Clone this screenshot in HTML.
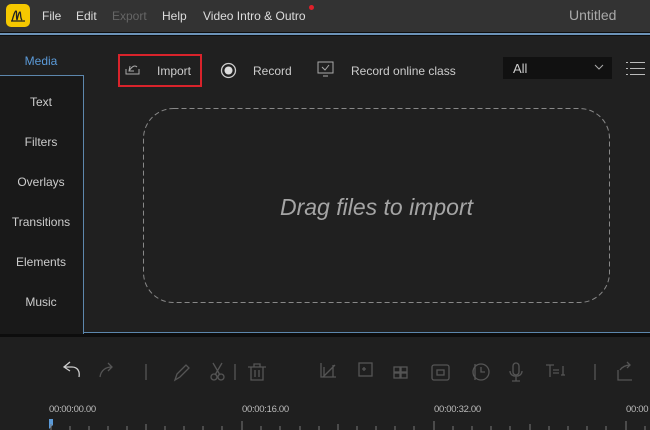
<!DOCTYPE html>
<html><head><meta charset="utf-8"><style>
*{margin:0;padding:0;box-sizing:border-box}
body{width:650px;height:430px;overflow:hidden;background:#0d0d0d;font-family:"Liberation Sans",sans-serif;position:relative;color:#ccc}
.abs{position:absolute}
#title{left:0;top:0;width:650px;height:32px;background:#333}
#title span{position:absolute;top:9px;font-size:12px;color:#ddd}
#main{left:0;top:36px;width:650px;height:297px;background:#202020}
#side{left:0;top:75px;width:84px;height:259px;background:#191919;border-top:1px solid #5d87ad;border-right:1px solid #5d87ad}
.st{position:absolute;left:0;width:82px;text-align:center;font-size:12px;color:#ccc}
.tb{font-size:12px;color:#ccc;position:absolute}
.gi{stroke:#555;fill:none;stroke-width:1.3}
.tc{position:absolute;top:404px;font-size:9.5px;color:#bbb;letter-spacing:-0.3px}
</style></head><body>
<div id="title" class="abs">
 <div class="abs" style="left:6px;top:4px;width:24px;height:23px;background:#f5c800;border-radius:5px"></div>
 <svg class="abs" style="left:9px;top:8px" width="18" height="16"><path d="M3 13 C5 6 6 3 7 3 C8 3 7 9 8 12 M8 12 C9 8 10 4 11 4 C12 5 11 10 13 12 M2 13 H16" stroke="#222" stroke-width="1.3" fill="none"/></svg>
 <span style="left:42px">File</span><span style="left:76px">Edit</span><span style="left:112px;color:#666">Export</span><span style="left:162px">Help</span><span style="left:203px">Video Intro &amp; Outro</span>
 <div class="abs" style="left:309px;top:5px;width:5px;height:5px;border-radius:50%;background:#e0202a"></div>
 <span style="left:569px;font-size:14px;top:7px;color:#aaa">Untitled</span>
</div>
<div class="abs" style="left:0;top:33px;width:650px;height:2px;background:#6c93b8"></div>
<div id="main" class="abs"></div>
<div class="st" style="top:54px;color:#5b9ad8">Media</div>
<div id="side" class="abs">
 <div class="st" style="top:19px">Text</div>
 <div class="st" style="top:59px">Filters</div>
 <div class="st" style="top:99px">Overlays</div>
 <div class="st" style="top:139px">Transitions</div>
 <div class="st" style="top:179px">Elements</div>
 <div class="st" style="top:219px">Music</div>
</div>
<div class="abs" style="left:83px;top:332px;width:567px;height:1px;background:#5d87ad"></div>
<div class="abs" style="left:118px;top:54px;width:84px;height:33px;border:2px solid #d9232b"></div>
<svg class="abs" style="left:125px;top:62px" width="16" height="14"><path d="M1 7 V12 H14 V7 M5 4 L4 9 L9 9 M4 9 C7 4 10 3 12 5" stroke="#aaa" fill="none"/></svg>
<div class="tb" style="left:157px;top:64px">Import</div>
<svg class="abs" style="left:220px;top:62px" width="17" height="17"><circle cx="8.5" cy="8.5" r="7" stroke="#ccc" stroke-width="1.3" fill="none"/><circle cx="8.5" cy="8.5" r="4" fill="#ddd"/></svg>
<div class="tb" style="left:253px;top:64px">Record</div>
<svg class="abs" style="left:317px;top:61px" width="18" height="17"><rect x="1" y="1" width="15" height="11" stroke="#aaa" fill="none"/><path d="M5 6 L8 9 L12 4 M6 15 H11" stroke="#aaa" fill="none"/></svg>
<div class="tb" style="left:351px;top:64px">Record online class</div>
<div class="abs" style="left:503px;top:57px;width:109px;height:22px;background:#111"></div>
<div class="tb" style="left:513px;top:61px;font-size:13px">All</div>
<svg class="abs" style="left:594px;top:64px" width="10" height="6"><path d="M1 1 L5 5 L9 1" stroke="#aaa" fill="none"/></svg>
<svg class="abs" style="left:626px;top:61px" width="20" height="15"><path d="M4 1.5H19M4 7.5H19M4 13.5H19M0 1.5H2M0 7.5H2M0 13.5H2" stroke="#bbb"/></svg>
<svg class="abs" style="left:0;top:0" width="650" height="430"><rect x="143.5" y="108.5" width="466" height="194" rx="30" stroke="#888" fill="none" stroke-dasharray="5 3"/></svg>
<div class="abs" style="left:143px;top:194px;width:467px;text-align:center;font-style:italic;font-size:23px;color:#a5a5a5">Drag files to import</div>
<div class="abs" style="left:0;top:337px;width:650px;height:93px;background:#1f1f1f"></div>
<svg class="abs" style="left:0;top:337px" width="650" height="93">
 <path d="M70 25 L64 30 L70 34 M64 30 H72 C78 30 80 35 79 40" stroke="#ccc" fill="none" stroke-width="1.3"/>
 <g class="gi">
 <path d="M100 40 C101 33 106 30 112 30 M108 26 L112 30 L108 34"/>
 <path d="M146 27V43M235 27V43M475 27V43"/>
 <path d="M175 43 L177 37 L186 28 L189 31 L180 40 Z"/>
 <path d="M213 26 L220 38 M222 26 L215 38"/><circle cx="214" cy="40" r="3"/><circle cx="221" cy="40" r="3"/>
 <path d="M248 30H266M254 30V27H260V30M251 30V43H263V30M255 33V40M259 33V40"/>
 <path d="M321 26V40H336M324 30V40H333V28M323 40L335 28"/>
 <rect x="359" y="26" width="13" height="13"/>
 <path d="M362 32H366M364 30V34"/>
 <rect x="394" y="30" width="6" height="5"/><rect x="401" y="30" width="6" height="5"/><rect x="394" y="36" width="6" height="5"/><rect x="401" y="36" width="6" height="5"/>
 <rect x="432" y="28" width="17" height="15" rx="2"/><rect x="437" y="33" width="7" height="5"/>
 <circle cx="481" cy="35" r="8"/><path d="M481 30V35H485"/>
 <rect x="513" y="26" width="6" height="12" rx="3"/><path d="M510 34C510 41 522 41 522 34M516 40V44M512 44H520"/>
 <path d="M546 28H554M550 28V40M553 33H559M553 36H559M563 29V38M561 38H565"/>
 <path d="M595 27V43"/>
 <path d="M618 33V43H632M620 33 C622 30 626 28 630 28 M627 25L630 28L627 31"/>
 </g>
</svg>
<div class="tc" style="left:49px">00:00:00.00</div>
<div class="tc" style="left:242px">00:00:16.00</div>
<div class="tc" style="left:434px">00:00:32.00</div>
<div class="tc" style="left:626px">00:00</div>
<svg class="abs" style="left:0;top:418px" width="650" height="12">
 <path d="M49 1 H53 V7 L49 11Z" fill="#5b9ad8"/>
 <g stroke="#777"><path d="M51 6V12M70 8V12M89 8V12M108 8V12M127 8V12M146 6V12M165 8V12M184 8V12M203 8V12M222 8V12M242 3V12M261 8V12M280 8V12M300 8V12M319 8V12M338 6V12M357 8V12M376 8V12M395 8V12M414 8V12M434 3V12M453 8V12M472 8V12M491 8V12M510 8V12M530 6V12M549 8V12M568 8V12M587 8V12M606 8V12M626 3V12M645 8V12"/></g>
</svg>
</body></html>
